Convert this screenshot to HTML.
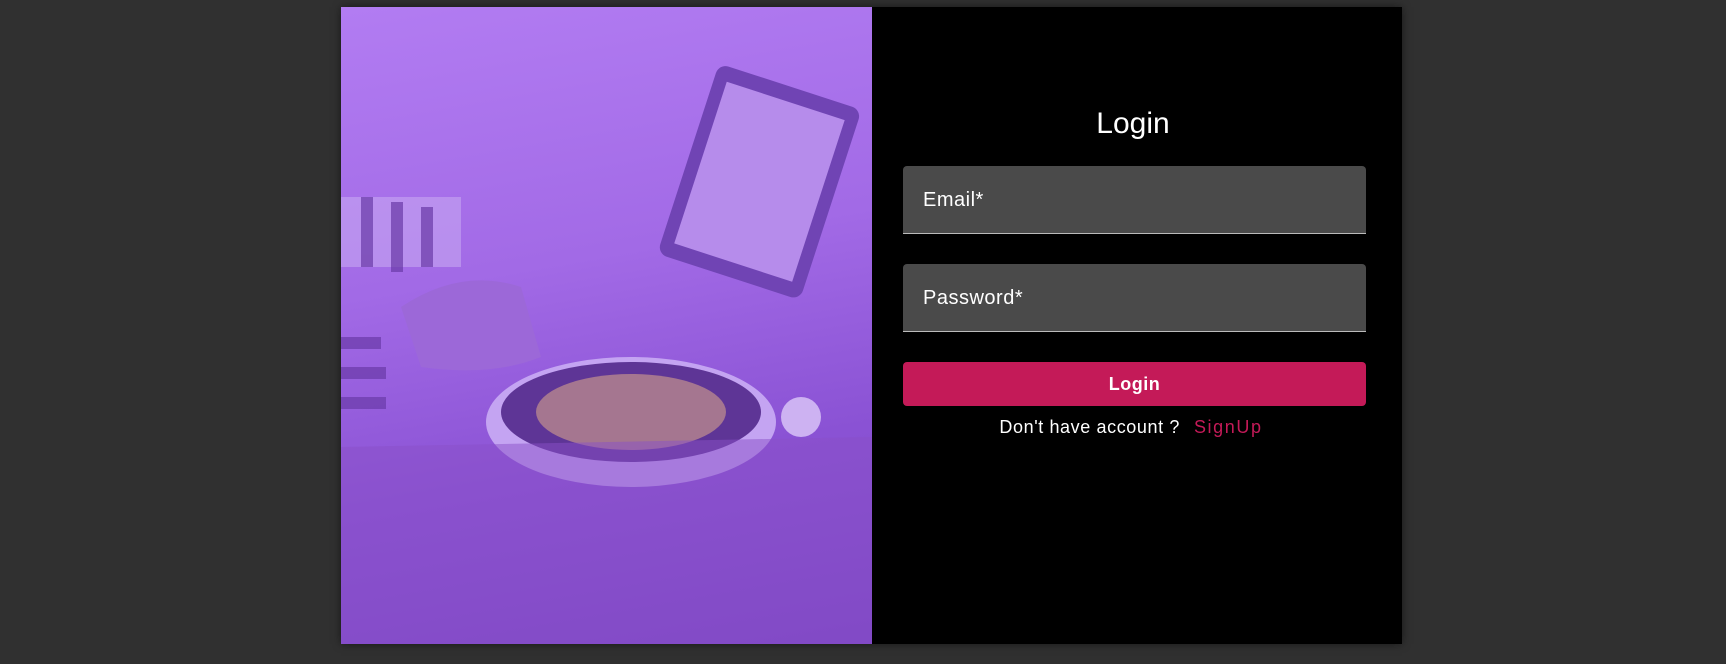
<!DOCTYPE html>
<html><head><meta charset="utf-8"><style>
body{margin:0;width:1726px;height:664px;background:#303030;font-family:"Liberation Sans",sans-serif;overflow:hidden}
.card{position:absolute;left:341px;top:7px;width:1061px;height:637px;box-shadow:0 0 8px rgba(0,0,0,.5)}
.img{position:absolute;left:0;top:0;width:531px;height:637px;background:linear-gradient(170deg,#b27cf2 0%,#a26ae6 40%,#8a52d4 70%,#7a44c4 100%);overflow:hidden}
.right{position:absolute;left:531px;top:0;width:530px;height:637px;background:#000}
h1{position:absolute;left:-4px;width:100%;top:100px;margin:0;text-align:center;color:#fff;font-weight:normal;font-size:30px}
.f{position:absolute;left:31px;width:463px;height:68px;background:#4a4a4a;border-radius:4px 4px 0 0;border-bottom:1px solid #bbb;color:#fff;font-size:20px;line-height:68px;box-sizing:border-box;padding-left:20px;letter-spacing:.5px}
.btn{position:absolute;left:31px;top:355px;width:463px;height:44px;background:#c41a58;border-radius:4px;color:#fff;text-align:center;line-height:44px;font-size:18px;font-weight:bold;letter-spacing:.5px}
.s{position:absolute;left:-6px;width:100%;top:410px;text-align:center;color:#fff;font-size:18px;letter-spacing:.6px}
.s span{color:#c41a58;margin-left:14px;letter-spacing:1.6px}
</style></head><body>
<div class="card">
<div class="img">
<svg width="531" height="637">
<g transform="rotate(18 420 170)"><rect x="345" y="75" width="150" height="200" rx="10" fill="#7044b4"/><rect x="358" y="90" width="124" height="170" fill="#b68ceb"/></g>
<rect x="0" y="190" width="120" height="70" fill="#c7a6f2" opacity=".6"/>
<g fill="#6a3aa8" opacity=".7"><rect x="20" y="190" width="12" height="70"/><rect x="50" y="195" width="12" height="70"/><rect x="80" y="200" width="12" height="60"/><rect x="0" y="330" width="40" height="12"/><rect x="0" y="360" width="45" height="12"/><rect x="0" y="390" width="45" height="12"/></g>
<ellipse cx="290" cy="415" rx="145" ry="65" fill="#c4a4f2"/>
<ellipse cx="290" cy="405" rx="130" ry="50" fill="#5e3596"/>
<ellipse cx="290" cy="405" rx="95" ry="38" fill="#a57690"/>
<path d="M0 440 L531 430 L531 637 L0 637Z" fill="#8a50c8" opacity=".5"/>
<path d="M60 300 Q120 260 180 280 L200 350 Q150 370 80 360Z" fill="#9c68d8"/>
<rect x="440" y="390" width="40" height="40" rx="20" fill="#cdb2f2"/>
</svg>
</div>
<div class="right">
<h1>Login</h1>
<div class="f" style="top:159px">Email*</div>
<div class="f" style="top:257px">Password*</div>
<div class="btn">Login</div>
<div class="s">Don't have account ?<span>SignUp</span></div>
</div>
</div>
</body></html>
